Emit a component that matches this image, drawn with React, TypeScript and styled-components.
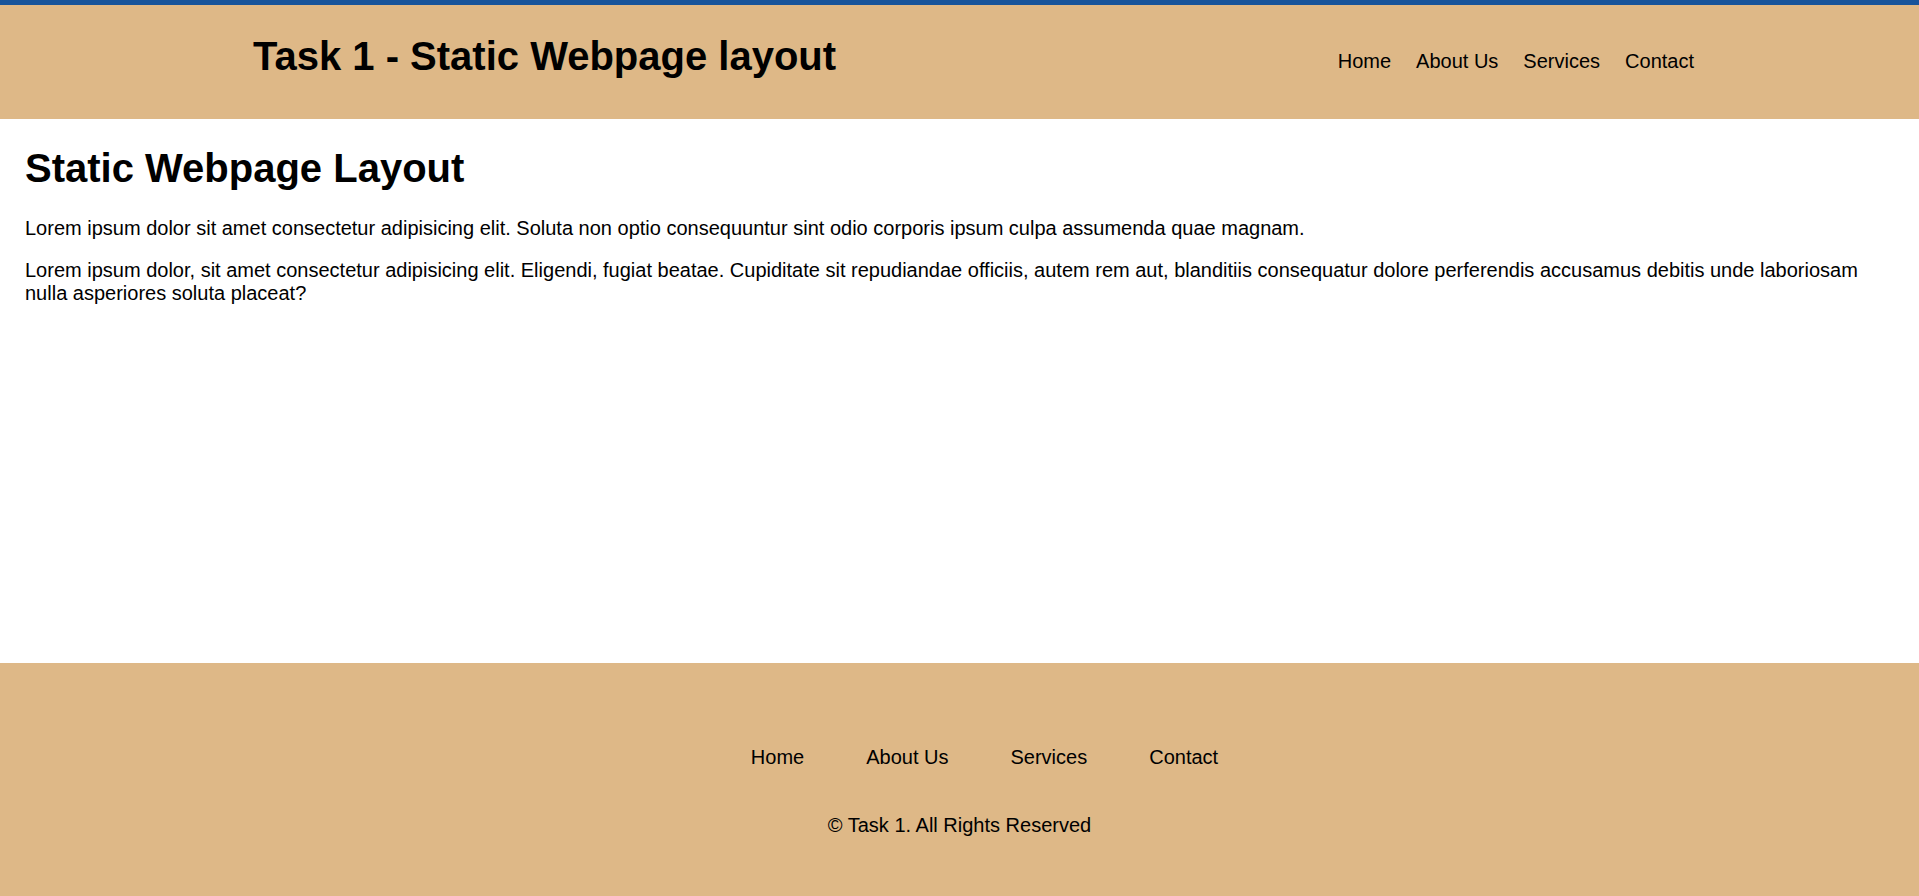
import React from 'react';
import styled, {createGlobalStyle} from 'styled-components';

const GlobalStyle = createGlobalStyle`
  html, body {
    margin: 0;
    padding: 0;
  }
  body {
    font-family: "Liberation Sans", Arial, sans-serif;
    color: #000;
    background: #fff;
  }
`

const Page = styled.div`
  min-height: 100vh;
  display: flex;
  flex-direction: column;
`

const Header = styled.header`
  display: flex;
  justify-content: space-between;
  align-items: center;
  background: #deb887;
  border-top: 5px solid #17549b;
  padding: 28px 225px 40px 253px;
`

const Title = styled.h1`
  margin: 0;
  font-size: 40px;
  line-height: 46px;
  font-weight: bold;
`

const NavList = styled.ul<{ $gap: number; $offset?: number; $lift?: number }>`
  display: flex;
  gap: ${p => p.$gap}px;
  list-style: none;
  margin: ${p => p.$lift || 0}px 0 0;
  padding: 0 0 0 ${p => p.$offset || 0}px;
  justify-content: center;
  font-size: 20px;
  line-height: 23px;
`

const NavLink = styled.a`
  color: #000;
  text-decoration: none;
`

const Main = styled.main`
  flex: 1;
  padding: 0 25px;
  h1 {
    margin: 26px 0 26px;
  }
`

const Text = styled.p`
  margin: 0 0 19px;
  font-size: 20px;
  line-height: 23px;
`

const Footer = styled.footer`
  background: #deb887;
  padding: 83px 0 59px;
  text-align: center;
`

const Copy = styled.p`
  margin: 45px 0 0;
  font-size: 20px;
  line-height: 23px;
`

const links = ['Home', 'About Us', 'Services', 'Contact']

const Nav = ({gap, offset, lift}: { gap: number; offset?: number; lift?: number }) => (
  <nav>
    <NavList $gap={gap} $offset={offset} $lift={lift}>
      {links.map(l => (
        <li key={l}><NavLink href="#">{l}</NavLink></li>
      ))}
    </NavList>
  </nav>
)

const App = () => {
  return (
    <>
      <GlobalStyle/>
      <Page>
        <Header>
          <Title>Task 1 - Static Webpage layout</Title>
          <Nav gap={25} lift={10}/>
        </Header>
        <Main>
          <Title>Static Webpage Layout</Title>
          <Text>
            Lorem ipsum dolor sit amet consectetur adipisicing elit. Soluta non optio consequuntur sint odio corporis ipsum culpa assumenda quae magnam.
          </Text>
          <Text>
            Lorem ipsum dolor, sit amet consectetur adipisicing elit. Eligendi, fugiat beatae. Cupiditate sit repudiandae officiis, autem rem aut, blanditiis consequatur dolore perferendis accusamus debitis unde laboriosam nulla asperiores soluta placeat?
          </Text>
        </Main>
        <Footer>
          <Nav gap={62} offset={50}/>
          <Copy>&copy; Task 1. All Rights Reserved</Copy>
        </Footer>
      </Page>
    </>
  );
};

export default App;
